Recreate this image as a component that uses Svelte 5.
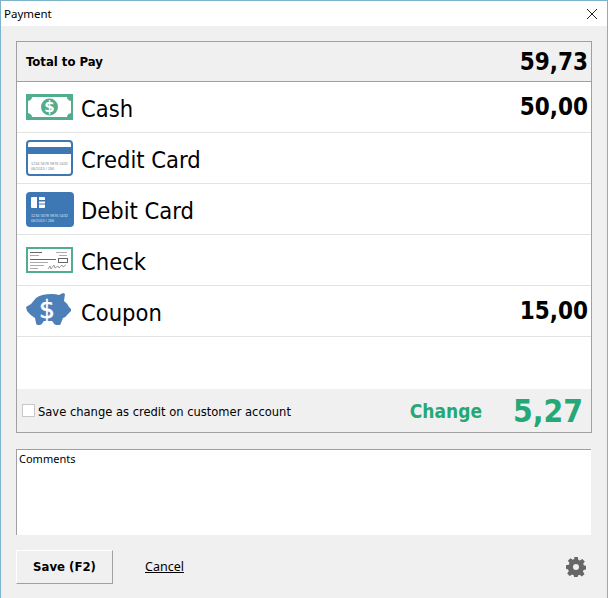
<script>
  const rows = [
    { id: 'cash', label: 'Cash', amount: '50,00' },
    { id: 'credit', label: 'Credit Card', amount: '' },
    { id: 'debit', label: 'Debit Card', amount: '' },
    { id: 'check', label: 'Check', amount: '' },
    { id: 'coupon', label: 'Coupon', amount: '15,00' }
  ];
</script>

<div class="window">
  <header class="titlebar">
    <span>Payment</span>
    <svg class="close" width="12" height="12" viewBox="0 0 12 12"><path d="M1 1l10 10M11 1L1 11" stroke="#222" stroke-width="1" fill="none" /></svg>
  </header>

  <main class="content">
    <section class="panel">
      <div class="total">
        <strong>Total to Pay</strong>
        <b class="amount">59,73</b>
      </div>

      {#each rows as row}
        <div class="row">
          <span class="icon">
            {#if row.id === 'cash'}
              <svg width="47" height="26" viewBox="0 0 47 26">
                <path fill="#52ae8a" fill-rule="evenodd" d="M0 0h47v26H0zM6 3q0 3-4 4v12q4 1 4 4h35q0-3 4-4V7q-4-1-4-4z" />
                <circle cx="23.500" cy="13" r="8.500" fill="#52ae8a" />
                <text x="23.500" y="18" class="dollar-small">$</text>
              </svg>
            {:else if row.id === 'credit'}
              <svg width="47" height="36" viewBox="0 0 47 36">
                <rect x="1" y="1" width="45" height="34" rx="3" fill="#fff" stroke="#3d78b4" stroke-width="2" />
                <rect x="1" y="7" width="45" height="7" fill="#3d78b4" />
                <text x="5" y="25" class="card-num">1234 5678 9876 5432</text>
                <text x="5" y="30" class="card-num">06/2013 / 266</text>
              </svg>
            {:else if row.id === 'debit'}
              <svg width="48" height="35" viewBox="0 0 48 35">
                <rect width="48" height="35" rx="4" fill="#3d78b4" />
                <path fill="#fff" d="M6 5h5v11H6q-1 0-1-1V6q0-1 1-1zM13 5h5q1 0 1 1v2h-6zM13 9.500h6v2h-6zM13 12.500h6V15q0 1-1 1h-5z" />
                <text x="5" y="25" class="card-num light">1234 5678 9876 5432</text>
                <text x="5" y="30" class="card-num light">06/2013 / 266</text>
              </svg>
            {:else if row.id === 'check'}
              <svg width="47" height="26" viewBox="0 0 47 26">
                <rect x="1" y="1" width="45" height="24" fill="#fff" stroke="#52ae8a" stroke-width="2" />
                <path d="M4 5.500h12" stroke="#666" stroke-width="1" />
                <path d="M4 8.500h9M4 15.500h18M4 18.500h14M4 21.500h8M30 5.500h11M33 8.500h8" stroke="#aaa" stroke-width="1" />
                <path d="M4 12.500h26" stroke="#666" stroke-width="1" />
                <rect x="32.500" y="11.500" width="9" height="4" fill="none" stroke="#666" stroke-width="1" />
                <path d="M22 22l2-3 1 3 3-4 1 3 3-2 1 2 3-3 1 2 3-2" stroke="#888" stroke-width=".8" fill="none" />
              </svg>
            {:else}
              <svg width="46" height="36" viewBox="0 0 46 36">
                <path fill="#4d80b8" d="M0 14l5-3 5-6Q15 1 26 1q4 0 7 1l4-2 2 1-1 7q4 3 5 6l2 2v2l-3 3q-2 3-5 4l-2 5q0 2-2 2h-3q-2 0-3-3l-1-1H18l-1 1q-1 3-3 3h-2q-2 0-2-2l-1-5Q4 22 1 18z" />
                <text x="21" y="25" class="dollar-big">$</text>
              </svg>
            {/if}
          </span>
          <span class="label">{row.label}</span>
          {#if row.amount}<b class="amount">{row.amount}</b>{/if}
        </div>
      {/each}

      <div class="spacer"></div>

      <div class="change">
        <label class="credit">
          <span class="checkbox"></span>
          <span class="credit-text">Save change as credit on customer account</span>
        </label>
        <strong class="change-label">Change</strong>
        <b class="change-value">5,27</b>
      </div>
    </section>

    <div class="comments">Comments</div>

    <footer class="actions">
      <button class="save">Save (F2)</button>
      <a class="cancel" href="#top">Cancel</a>
      <svg class="gear" width="20" height="20" viewBox="0 0 20 20">
        <path fill="#666" fill-rule="evenodd" d="M8.200 0h3.600l.5 2.800 1.600.7 2.400-1.600 2.500 2.500-1.600 2.400.7 1.600 2.500.4v3.600l-2.800.5-.7 1.600 1.600 2.400-2.500 2.500-2.400-1.600-1.600.7-.4 2.500H8.200l-.5-2.800-1.600-.7-2.400 1.600-2.500-2.500 1.600-2.400-.7-1.600L0 11.800V8.200l2.800-.5.7-1.600-1.600-2.400 2.500-2.500 2.400 1.600 1.600-.7zM10 7a3 3 0 1 0 0 6 3 3 0 0 0 0-6z" />
      </svg>
    </footer>
  </main>
</div>

<style>
  :global(body) {
    margin: 0;
    background: #f0f0f0;
  }
  .window {
    box-sizing: border-box;
    width: 608px;
    height: 598px;
    border: 1px solid #7fb2cc;
    border-bottom: 0;
    background: #f0f0f0;
    font-family: "DejaVu Sans", sans-serif;
    color: #000;
    overflow: hidden;
  }
  .titlebar {
    display: flex;
    justify-content: space-between;
    align-items: center;
    height: 25px;
    padding: 0 9px 0 3px;
    background: #fff;
    font: 11.500px "Noto Sans", sans-serif;
  }
  .content {
    padding: 15px 15px 0;
  }
  .panel {
    box-sizing: border-box;
    height: 392px;
    border: 1px solid #a0a0a0;
    display: flex;
    flex-direction: column;
    background: #fff;
  }
  .total {
    box-sizing: border-box;
    height: 40px;
    display: flex;
    justify-content: space-between;
    align-items: center;
    padding: 0 3px 0 9px;
    background: #f0f0f0;
    border-bottom: 1px solid #a0a0a0;
    font-size: 13px;
  }
  .total strong {
    font-stretch: condensed;
  }
  .amount {
    font-size: 24px;
    font-stretch: condensed;
  }
  .row {
    box-sizing: border-box;
    height: 51px;
    display: flex;
    align-items: center;
    padding: 0 3px 0 9px;
    border-bottom: 1px solid #e3e3e3;
  }
  .icon {
    width: 55px;
    display: flex;
    align-items: center;
  }
  .label {
    flex: 1;
    padding-top: 3px;
    font: 23.500px "DejaVu Sans", sans-serif;
    font-stretch: condensed;
  }
  .dollar-small {
    font: bold 15px "DejaVu Sans", sans-serif;
    fill: #fff;
    text-anchor: middle;
  }
  .dollar-big {
    font: 25px "DejaVu Sans", sans-serif;
    fill: #fff;
    stroke: #fff;
    stroke-width: .5px;
    text-anchor: middle;
  }
  .card-num {
    font: 3.800px "Liberation Sans", sans-serif;
    fill: #7c8794;
  }
  .card-num.light {
    fill: #d5e2ef;
  }
  .spacer {
    flex: 1;
  }
  .change {
    height: 43px;
    display: flex;
    align-items: center;
    padding: 0 8px 0 5px;
    background: #f0f0f0;
  }
  .credit {
    flex: 1;
    display: flex;
    align-items: center;
    gap: 3px;
    font: 12.800px "DejaVu Sans", sans-serif;
    font-stretch: condensed;
  }
  .credit-text {
    padding-top: 2px;
  }
  .checkbox {
    width: 11px;
    height: 11px;
    border: 1px solid #c8c8c8;
    background: #fff;
  }
  .change-label {
    font-size: 19px;
    font-stretch: condensed;
    color: #25a876;
    margin-right: 31px;
  }
  .change-value {
    font-size: 31.500px;
    font-stretch: condensed;
    color: #25a876;
  }
  .comments {
    box-sizing: border-box;
    height: 86px;
    margin-top: 16px;
    padding: 1px 2px;
    width: 575px;
    background: #fff;
    border-top: 1px solid #a0a0a0;
    border-left: 1px solid #a0a0a0;
    font: 11px "Noto Sans", sans-serif;
  }
  .actions {
    display: flex;
    align-items: center;
    margin-top: 15px;
    height: 34px;
    padding-right: 6px;
  }
  .save {
    box-sizing: border-box;
    width: 97px;
    height: 34px;
    padding: 0 0 2px;
    background: #f0f0f0;
    border: 1px solid;
    border-color: #fff #a0a0a0 #a0a0a0 #fff;
    font: bold 13px "DejaVu Sans", sans-serif;
    font-stretch: condensed;
  }
  .cancel {
    margin: 0 0 2px 32px;
    color: #000;
    font: 12.500px "Noto Sans", sans-serif;
  }
  .gear {
    margin-left: auto;
  }
</style>
